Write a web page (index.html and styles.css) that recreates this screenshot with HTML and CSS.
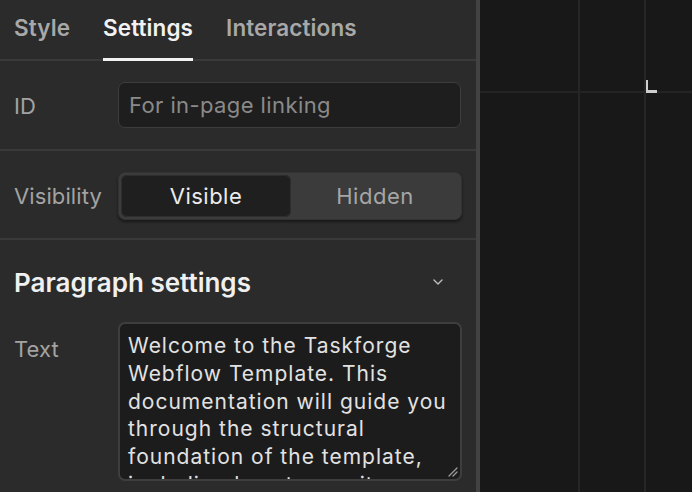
FILE: index.html
```html
<!DOCTYPE html>
<html>
<head>
<meta charset="utf-8">
<link rel="stylesheet" href="styles.css">
</head>
<body>
<div class="app">
  <aside class="panel">
    <nav class="tabs">
      <div class="tab">Style</div>
      <div class="tab active">Settings</div>
      <div class="tab">Interactions</div>
    </nav>
    <section class="row row-id">
      <div class="label">ID</div>
      <div class="input"><span class="placeholder">For in-page linking</span></div>
    </section>
    <section class="row row-vis">
      <div class="label">Visibility</div>
      <div class="segmented">
        <div class="seg on">Visible</div>
        <div class="seg">Hidden</div>
      </div>
    </section>
    <section class="para">
      <div class="para-head">
        <div class="para-title">Paragraph settings</div>
        <svg class="chev" width="12" height="8" viewBox="0 0 12 8"><path d="M2 2 L6 6 L10 2" fill="none" stroke="#bdbdbd" stroke-width="1.4" stroke-linecap="round" stroke-linejoin="round"/></svg>
      </div>
      <div class="row row-text">
        <div class="label">Text</div>
        <div class="textbox">
          <div class="textbody">Welcome to the Taskforge Webflow Template. This documentation will guide you through the structural foundation of the template, including how to use its components and styles.</div>
          <svg class="grip" width="12" height="12" viewBox="0 0 12 12"><path d="M11 3 L3 11 M11 7 L7 11" stroke="#9a9a9a" stroke-width="1.3" stroke-linecap="round"/></svg>
        </div>
      </div>
    </section>
  </aside>
  <div class="strip"></div>
  <main class="canvas">
    <div class="vline v1"></div>
    <div class="vline v2"></div>
    <div class="hline"></div>
    <div class="corner"></div>
  </main>
</div>
</body>
</html>
```
FILE: styles.css
```css
* { box-sizing: border-box; }
html, body { margin: 0; padding: 0; }
body {
  width: 692px;
  height: 492px;
  overflow: hidden;
  background: #181818;
  font-family: Inter, "Noto Sans", sans-serif;
  color: #d9d9d9;
}
.app { display: flex; height: 492px; }
.panel {
  width: 476px;
  flex: none;
  background: #2b2b2b;
  display: flex;
  flex-direction: column;
}
.strip { width: 4px; flex: none; background: #424242; }
.canvas { flex: 1; position: relative; background: #181818; }

.tabs {
  display: flex;
  height: 61px;
  border-bottom: 2px solid #3a3a3a;
  padding-left: 14px;
  gap: 33px;
}
.tab {
  font-size: 22.5px;
  font-weight: 600;
  letter-spacing: 0.1px;
  color: #a8a8a8;
  line-height: 56px;
  position: relative;
}
.tab.active { color: #f2f2f2; }
.tab.active::after {
  content: "";
  position: absolute;
  left: 0; right: 0; bottom: -2px;
  height: 3px;
  background: #f2f2f2;
}

.row { display: flex; align-items: center; padding-left: 14px; }
.label { width: 104px; flex: none; font-size: 22px; letter-spacing: 0.1px; color: #a3a3a3; }
.row-id { height: 90px; border-bottom: 2px solid #3a3a3a; }
.row-id .label { padding-top: 2px; }
.input {
  width: 343px;
  height: 46px;
  background: #1e1e1e;
  border: 1px solid #3d3d3d;
  border-radius: 7px;
  padding-left: 10px;
  display: flex;
  align-items: center;
}
.placeholder { font-size: 22px; letter-spacing: 0.4px; color: #8a8a8a; }

.row-vis { height: 89px; border-bottom: 2px solid #3a3a3a; padding-top: 2px; }
.segmented {
  width: 344px;
  height: 48px;
  background: #3b3b3b;
  border: 1px solid #333;
  border-radius: 7px;
  padding: 2px;
  display: flex;
  box-shadow: 0 2px 3px rgba(0,0,0,0.45);
}
.seg {
  flex: 1;
  display: flex;
  align-items: center;
  justify-content: center;
  font-size: 22px;
  letter-spacing: 0.5px;
  color: #a6a6a6;
}
.seg.on {
  flex: none;
  width: 170px;
  background: #1f1f1f;
  border-radius: 6px;
  color: #ececec;
  box-shadow: inset 0 0 0 1px #2e2e2e;
}

.para { display: flex; flex-direction: column; }
.para-head {
  height: 82px;
  display: flex;
  align-items: center;
  justify-content: space-between;
  padding: 2px 32px 0 14px;
}
.para-title { font-size: 26px; font-weight: 600; color: #f0f0f0; }
.chev { display: block; }
.row-text { align-items: flex-start; }
.row-text .label { padding-top: 14px; }
.textbox {
  position: relative;
  width: 344px;
  height: 159px;
  background: #1c1c1c;
  border: 2px solid #3e3e3e;
  border-radius: 7px;
  overflow: hidden;
}
.textbody {
  padding: 8px 8px 0;
  font-size: 21px;
  letter-spacing: 1px;
  line-height: 27.8px;
  color: #e2e2e2;
}
.grip { position: absolute; right: 2px; bottom: 2px; }

.vline { position: absolute; top: 0; bottom: 0; width: 2px; background: #262626; }
.v1 { left: 98px; }
.v2 { left: 164px; }
.hline { position: absolute; left: 0; right: 0; top: 91px; height: 2px; background: #242424; }
.corner {
  position: absolute;
  left: 166px;
  top: 80px;
  width: 11px;
  height: 13px;
  border-left: 2px solid #cfcfcf;
  border-bottom: 3px solid #cfcfcf;
}
```
